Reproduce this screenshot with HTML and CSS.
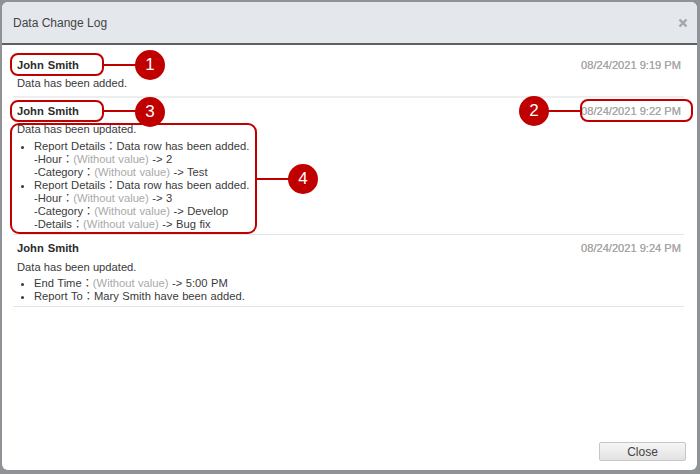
FILE: index.html
```html
<!DOCTYPE html>
<html lang="en">
<head>
<meta charset="utf-8">
<title>Data Change Log</title>
<link rel="stylesheet" href="styles.css">
</head>
<body>
<div class="dialog">
  <header class="head">
    <span class="title">Data Change Log</span>
    <svg class="x" width="10" height="10" viewBox="0 0 10 10"><path d="M1.5 1.5l7 7M8.5 1.5l-7 7" stroke="#a3a6a8" stroke-width="2.4"/></svg>
  </header>
  <main class="log">
    <section class="entry e1">
      <div class="top"><b class="name">John Smith</b><span class="time">08/24/2021 9:19 PM</span></div>
      <p class="msg">Data has been added.</p>
    </section>
    <section class="entry e2">
      <div class="top"><b class="name">John Smith</b><span class="time">08/24/2021 9:22 PM</span></div>
      <p class="msg">Data has been updated.</p>
      <ul class="list">
        <li>Report Details：Data row has been added.<br>-Hour：<span class="nil">(Without value)</span> -&gt; 2<br>-Category：<span class="nil">(Without value)</span> -&gt; Test</li>
        <li>Report Details：Data row has been added.<br>-Hour：<span class="nil">(Without value)</span> -&gt; 3<br>-Category：<span class="nil">(Without value)</span> -&gt; Develop<br>-Details：<span class="nil">(Without value)</span> -&gt; Bug fix</li>
      </ul>
    </section>
    <section class="entry e3">
      <div class="top"><b class="name">John Smith</b><span class="time">08/24/2021 9:24 PM</span></div>
      <p class="msg">Data has been updated.</p>
      <ul class="list">
        <li>End Time：<span class="nil">(Without value)</span> -&gt; 5:00 PM</li>
        <li>Report To：Mary Smith have been added.</li>
      </ul>
    </section>
  </main>
  <footer class="foot"><button class="close" type="button">Close</button></footer>
</div>

<div class="box b1"></div><div class="line l1"></div><div class="pin p1">1</div>
<div class="box b2"></div><div class="line l2"></div><div class="pin p2">2</div>
<div class="box b3"></div><div class="line l3"></div><div class="pin p3">3</div>
<div class="box b4"></div><div class="line l4"></div><div class="pin p4">4</div>
</body>
</html>
```

FILE: styles.css
```css
* { box-sizing: border-box; }
html, body { margin: 0; height: 100%; }
body {
  width: 700px;
  height: 474px;
  overflow: hidden;
  background: #8f9296;
  padding: 2px 3px 4px 2px;
  font: 11.2px/13px "Liberation Sans", "Noto Sans CJK JP", Arial, sans-serif;
  color: #3a3a3a;
  position: relative;
}
.dialog {
  height: 468px;
  background: #fff;
  border-radius: 6px;
  display: flex;
  flex-direction: column;
  overflow: hidden;
}
.head {
  height: 43px;
  flex: none;
  background: #e4e7eb;
  border-bottom: 2px solid #5e6062;
  display: flex;
  align-items: center;
  justify-content: space-between;
  padding: 1px 9px 0 11px;
}
.title { color: #444; font-size: 12px; }
.log { flex: 1; padding: 0 13px 0 11px; }
.entry { border-bottom: 1px solid #e4e4e4; padding: 0 4px; }
.e1 { height: 53px; padding-top: 13px; border-bottom-width: 2px; border-bottom-color: #eee; }
.e2 { height: 137px; padding-top: 6px; }
.e3 { height: 72px; padding-top: 6px; }
.top { display: flex; justify-content: space-between; align-items: center; height: 14px; }
.name { color: #2b2b2b; word-spacing: 1px; }
.time { color: #a6a6a6; font-size: 11.1px; text-shadow: 0 0 .2px #a6a6a6; margin-right: -1px; }
.msg { margin: 5px 0 0; }
.e3 .msg { margin-top: 6px; }
.list { margin: 4px 0 0; padding: 0 0 0 17px; word-spacing: .4px; }
.e3 .list { margin-top: 3px; }
.nil { color: #a9a9a9; }
.foot { flex: none; height: 28px; display: flex; justify-content: flex-end; align-items: flex-start; padding-right: 11px; }
.close {
  width: 87px;
  height: 19px;
  padding: 0;
  border: 1px solid #c6c6c6;
  border-radius: 2px;
  background: linear-gradient(#f6f6f6, #e2e2e2);
  font: 12px "Liberation Sans", Arial, sans-serif;
  color: #444;
}
.box { position: absolute; border: 2px solid #c00000; border-radius: 8px; }
.line { position: absolute; height: 2px; background: #c00000; }
.pin {
  position: absolute;
  width: 30px;
  height: 30px;
  border-radius: 50%;
  background: #c00000;
  color: #fff;
  font-size: 17px;
  line-height: 30px;
  text-align: center;
}
.b1 { left: 10px; top: 53px; width: 94px; height: 23px; }
.l1 { left: 103px; top: 64px; width: 33px; }
.p1 { left: 135px; top: 50px; }
.b2 { left: 580px; top: 99px; width: 113px; height: 23px; }
.l2 { left: 548px; top: 110px; width: 33px; }
.p2 { left: 519px; top: 96px; }
.b3 { left: 10px; top: 100px; width: 94px; height: 22px; }
.l3 { left: 103px; top: 110px; width: 33px; }
.p3 { left: 135px; top: 97px; }
.b4 { left: 10px; top: 123px; width: 247px; height: 111px; border-radius: 9px; }
.l4 { left: 256px; top: 178px; width: 33px; }
.p4 { left: 288px; top: 164px; }
```
